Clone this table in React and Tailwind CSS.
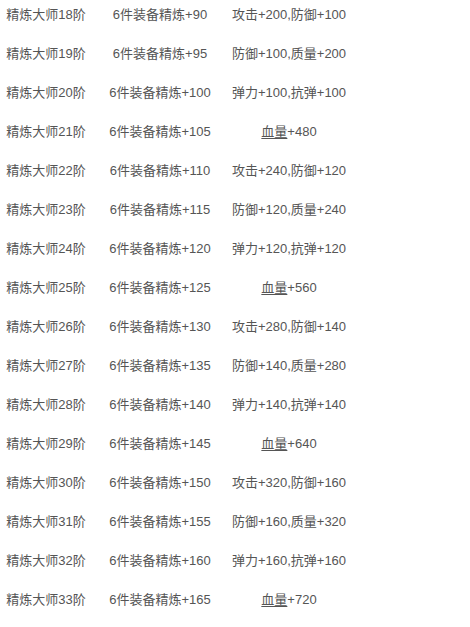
import React from 'react';

const rows = [
  [18, 90, '攻击+200,防御+100'],
  [19, 95, '防御+100,质量+200'],
  [20, 100, '弹力+100,抗弹+100'],
  [21, 105, null, 480],
  [22, 110, '攻击+240,防御+120'],
  [23, 115, '防御+120,质量+240'],
  [24, 120, '弹力+120,抗弹+120'],
  [25, 125, null, 560],
  [26, 130, '攻击+280,防御+140'],
  [27, 135, '防御+140,质量+280'],
  [28, 140, '弹力+140,抗弹+140'],
  [29, 145, null, 640],
  [30, 150, '攻击+320,防御+160'],
  [31, 155, '防御+160,质量+320'],
  [32, 160, '弹力+160,抗弹+160'],
  [33, 165, null, 720],
];

const App = () => {
  return (
    <div className="w-[470px] h-[627px] bg-white overflow-hidden text-[13px] leading-[18px] text-[#555]"
      style={{ fontFamily: '"Liberation Sans", "Noto Sans CJK SC", sans-serif' }}>
      {rows.map(([lv, plus, bonus, hp]) => (
        <div key={lv} className="grid grid-cols-[92px_136px_122px] pt-[6px] pb-[15px] text-center whitespace-nowrap">
          <span>精炼大师{lv}阶</span>
          <span>6件装备精炼+{plus}</span>
          {bonus ? (
            <span>{bonus}</span>
          ) : (
            <span><span className="underline underline-offset-2">血量</span>+{hp}</span>
          )}
        </div>
      ))}
    </div>
  );
};

export default App;
